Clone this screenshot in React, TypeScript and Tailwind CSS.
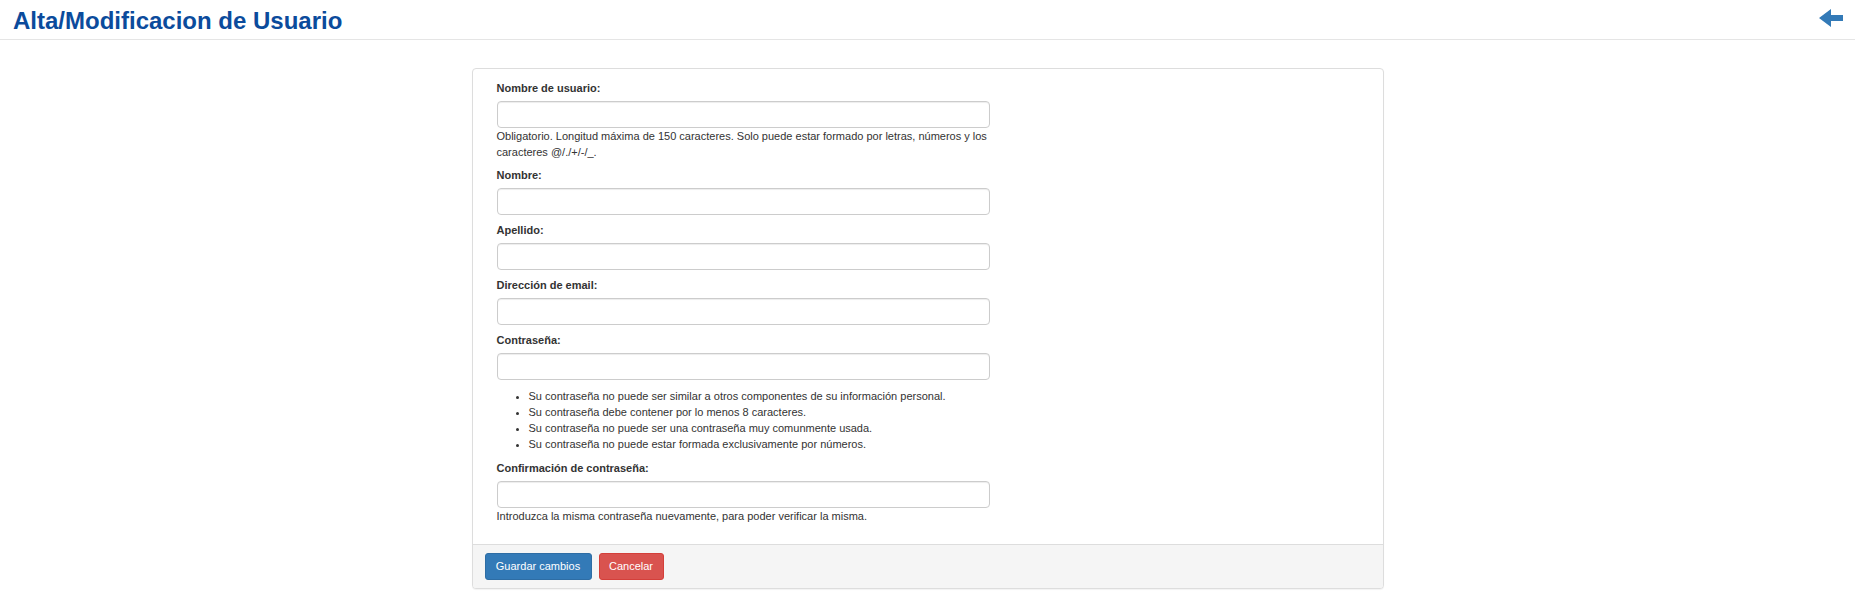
import React from 'react';

const fields = [
  { label: 'Nombre de usuario:', help: 'Obligatorio. Longitud máxima de 150 caracteres. Solo puede estar formado por letras, números y los caracteres @/./+/-/_.' },
  { label: 'Nombre:' },
  { label: 'Apellido:' },
  { label: 'Dirección de email:' },
  {
    label: 'Contraseña:',
    rules: [
      'Su contraseña no puede ser similar a otros componentes de su información personal.',
      'Su contraseña debe contener por lo menos 8 caracteres.',
      'Su contraseña no puede ser una contraseña muy comunmente usada.',
      'Su contraseña no puede estar formada exclusivamente por números.',
    ],
  },
  { label: 'Confirmación de contraseña:', help: 'Introduzca la misma contraseña nuevamente, para poder verificar la misma.' },
];

type Field = { label: string; help?: string; rules?: string[] };

const FormField: React.FC<{ field: Field }> = ({ field }) => (
  <div className="flex flex-col">
    <label className="block text-[11px] leading-[16px] font-bold text-[#333] mb-[5px]">{field.label}</label>
    <input
      type="text"
      className="w-[493px] h-[27px] border border-[#ccc] rounded-[4px] bg-white shadow-[inset_0_1px_1px_rgba(0,0,0,0.075)] outline-none px-2 text-[11px]"
    />
    {field.help && (
      <div className="w-[493px] text-[11px] leading-[16px] text-[#333]">{field.help}</div>
    )}
    {field.rules && (
      <ul className="list-disc pl-[32px] mt-[8px] mb-px text-[11px] leading-[16px] text-[#333]">
        {field.rules.map((r) => (
          <li key={r}>{r}</li>
        ))}
      </ul>
    )}
  </div>
);

export default function App() {
  return (
    <div className="min-h-[605px] bg-white font-['Liberation_Sans',Arial,sans-serif]">
      <div className="h-[40px] border-b border-[#e5e5e5] flex items-start justify-between pl-[13px] pr-[12px]">
        <h1 className="pt-[7px] text-[24px] leading-[28px] font-bold text-[#0b4b9c]">Alta/Modificacion de Usuario</h1>
        <svg className="mt-[9px]" width="24" height="18" viewBox="0 0 24 18" fill="#337ab7">
          <path d="M0 9 L12 0 L12 6 L24 6 L24 12 L12 12 L12 18 Z" />
        </svg>
      </div>

      <div className="w-[912px] mx-auto mt-[28px] border border-[#ddd] rounded-[4px] bg-white shadow-[0_1px_1px_rgba(0,0,0,0.05)] overflow-hidden">
        <div className="pt-[11px] pb-[20px] pl-[24px] flex flex-col gap-[7px]">
          {fields.map((f) => (
            <FormField key={f.label} field={f} />
          ))}
        </div>
        <div className="bg-[#f5f5f5] border-t border-[#ddd] pt-[8px] pb-[8px] pl-[12px] flex gap-[7px]">
          <button className="w-[107px] h-[27px] bg-[#337ab7] border border-[#2e6da4] rounded-[3px] text-white text-[11px]">
            Guardar cambios
          </button>
          <button className="w-[65px] h-[27px] bg-[#d9534f] border border-[#d43f3a] rounded-[3px] text-white text-[11px]">
            Cancelar
          </button>
        </div>
      </div>
    </div>
  );
}
